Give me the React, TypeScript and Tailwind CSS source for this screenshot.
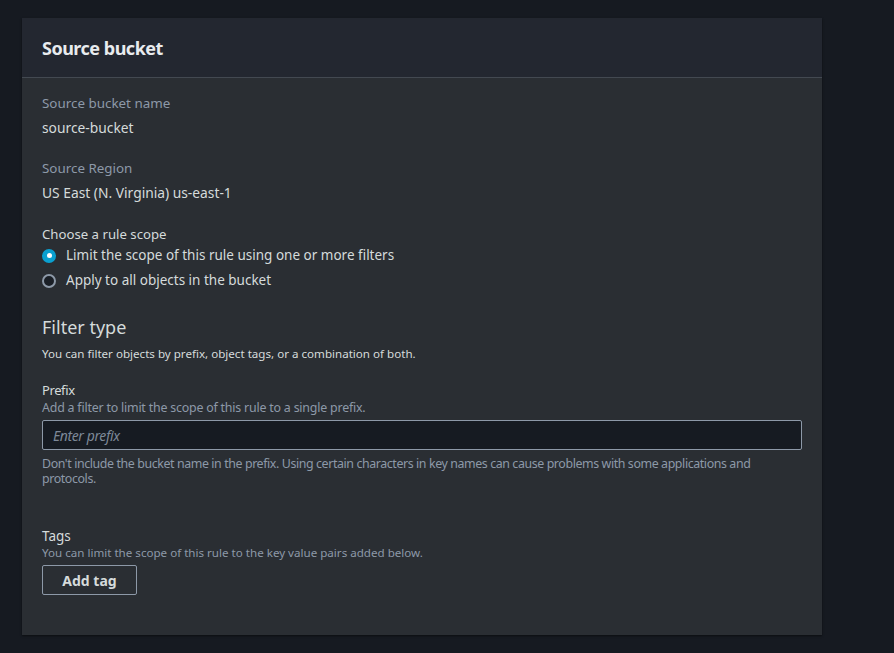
import React from 'react';

function Radio({ checked, label }: { checked?: boolean; label: string }) {
  return (
    <label className="flex items-center gap-[10px] h-[25px] text-[13.5px] text-[#d5dbdb]">
      {checked ? (
        <span className="w-[14px] h-[14px] rounded-full bg-[#0aa0d0] flex items-center justify-center">
          <span className="w-[5px] h-[5px] rounded-full bg-white" />
        </span>
      ) : (
        <span className="w-[14px] h-[14px] rounded-full border-2 border-[#8d99a8] bg-[#1a1f26]" />
      )}
      {label}
    </label>
  );
}

export default function App() {
  return (
    <div className="min-h-[653px] w-full bg-[#161a21] pt-[18px] pl-[22px]" style={{ fontFamily: '"Noto Sans", "Open Sans", sans-serif' }}>
      <section className="w-[800px] h-[617px] bg-[#2a2e33] shadow-[0_1px_2px_rgba(0,0,0,0.5)]">
        <div className="h-[60px] bg-[#232730] border-b border-[#434951] px-[20px] flex items-center pt-[2px]">
          <h2 className="text-[18px] font-bold text-[#e8ebee] tracking-[-0.5px]">Source bucket</h2>
        </div>

        <div className="px-[20px] pt-[15px]">
          <div className="text-[13.4px] leading-[20px] text-[#8d99a8]">Source bucket name</div>
          <div className="text-[13.8px] leading-[20px] mt-[5px] text-[#d5dbdb]">source-bucket</div>

          <div className="text-[13.4px] leading-[20px] mt-[20px] text-[#8d99a8]">Source Region</div>
          <div className="text-[13.8px] leading-[20px] mt-[5px] text-[#d5dbdb]">US East (N. Virginia) us-east-1</div>

          <div className="text-[13.2px] leading-[18px] mt-[22px] text-[#d5dbdb]">Choose a rule scope</div>
          <div className="flex flex-col">
            <Radio checked label="Limit the scope of this rule using one or more filters" />
            <Radio label="Apply to all objects in the bucket" />
          </div>

          <h3 className="text-[18px] leading-[24px] mt-[22px] text-[#d5dbdb]">Filter type</h3>
          <p className="text-[11.6px] leading-[16px] mt-[7px] text-[#d5dbdb]">
            You can filter objects by prefix, object tags, or a combination of both.
          </p>

          <div className="mt-[19px] text-[13px] leading-[18px] text-[#d5dbdb] tracking-[-0.4px]">Prefix</div>
          <div className="text-[12.4px] leading-[17px] text-[#8d99a8] tracking-[-0.2px]">
            Add a filter to limit the scope of this rule to a single prefix.
          </div>
          <input
            className="mt-[4px] w-[760px] h-[30px] bg-[#161b22] border border-[#8d99a8] rounded-[2px] px-[10px] text-[14px] italic text-[#d5dbdb] placeholder:text-[#7d8998] outline-none tracking-[-0.4px]"
            placeholder="Enter prefix"
          />
          <p className="mt-[6px] text-[12.4px] leading-[15px] text-[#8d99a8] tracking-[-0.4px]">
            Don't include the bucket name in the prefix. Using certain characters in key names can cause problems with some applications and protocols.
          </p>

          <div className="mt-[41px] text-[13.5px] leading-[18px] text-[#d5dbdb]">Tags</div>
          <div className="text-[11.6px] leading-[16px] text-[#8d99a8]">
            You can limit the scope of this rule to the key value pairs added below.
          </div>
          <button className="mt-[4px] w-[95px] h-[30px] border border-[#8d99a8] rounded-[2px] text-[14px] font-bold text-[#d5dbdb]">
            Add tag
          </button>
        </div>
      </section>
    </div>
  );
}
